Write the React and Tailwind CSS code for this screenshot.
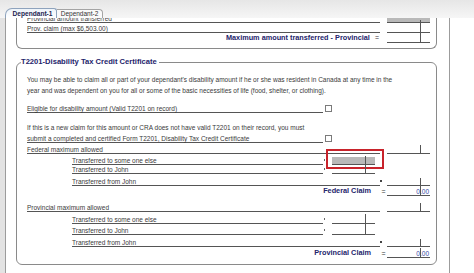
import React from "react";

// small field on the right side of a row, with the little tick mark the form draws
const Field = ({ tick, gray, children }) => (
  <div className="relative shrink-0 w-[43px] h-full flex items-end justify-end">
    {gray && <div className="absolute inset-x-0 bottom-0 h-[8px] bg-[#b9b9b9]" />}
    <div className="relative w-full border-b border-[#555] flex justify-end text-[6.5px] leading-[7px] text-[#3748a6] pr-[1px]">
      {children}
    </div>
    {tick && <div className={`absolute left-[33px] bottom-0 border-l border-[#555] ${tick}`} />}
  </div>
);

const Dot = () => (
  <div className="shrink-0 w-[9px] h-full flex items-end">
    <div className="ml-[1px] mb-[4px] w-[1px] h-[2px] bg-[#666]" />
  </div>
);

const Bullet = () => (
  <div className="shrink-0 w-[7px] h-full flex items-end">
    <div className="mb-[4px] w-[2px] h-[2px] bg-[#444]" />
  </div>
);

const Check = () => <div className="shrink-0 ml-[2px] mb-[1px] w-[7px] h-[7px] border border-[#7a7a7a] bg-white" />;

const label = "shrink-0 border-b border-[#555] text-[6.5px] leading-[7px] text-[#3a3a3a] whitespace-nowrap";
const claim = "font-bold text-[7.3px] leading-[8px] text-[#24246b] whitespace-nowrap";

const App = () => {
  return (
    <div className="w-[474px] h-[273px] overflow-hidden bg-white font-['Liberation_Sans',Arial,sans-serif]">
      {/* tab strip */}
      <div className="h-[18px] bg-linear-to-b from-[#e6e6e6] to-[#f6f6f6] flex items-end pl-[5px]">
        <div className="h-[10px] w-[52px] rounded-tl-[7px] rounded-tr-[3px] border border-b-0 border-[#8ea3bd] bg-linear-to-b from-[#eef4fa] to-white flex items-center justify-center pl-[3px] text-[6.6px] font-bold text-[#1c2450]">
          Dependant-1
        </div>
        <div className="h-[9px] w-[46px] rounded-tr-[4px] border border-l-0 border-b-0 border-[#a4a4a4] bg-[#fafafa] flex items-center justify-center text-[6.5px] text-[#333]">
          Dependant-2
        </div>
      </div>

      <div className="flex h-[255px]">
        <div className="w-[5px] bg-[#e3e3e3]" />
        <div className="w-[445px] border-l border-r border-[#9c9c9c] pl-[10px] overflow-hidden">
          {/* top panel, cut off by the tab strip */}
          <div className="w-[421px] border-l border-r border-b border-[#8a8a8a] rounded-b-[6px] pl-[10px] pb-[5px]">
            <div className="flex items-end h-[5px] overflow-hidden">
              <div className={`w-[353px] ${label}`}>Provincial amount transferred</div>
              <div className="shrink-0 w-[7px]" />
              <Field gray tick="h-[3px]" />
            </div>
            <div className="flex items-end h-[10px]">
              <div className={`w-[353px] ${label}`}>Prov. claim (max $6,503.00)</div>
              <div className="shrink-0 w-[7px]" />
              <Field tick="h-[10px]" />
            </div>
            <div className="flex items-end h-[10px]">
              <div className="shrink-0 w-[360px] flex justify-end items-end pr-[8px] pb-[1px]">
                <span className={claim}>Maximum amount transferred - Provincial</span>
                <span className="ml-[5px] text-[7px] leading-[8px] text-[#333]">=</span>
              </div>
              <Field tick="h-[10px]" />
            </div>
          </div>

          {/* T2201 panel */}
          <fieldset className="mt-[9px] w-[421px] border border-[#8a8a8a] rounded-[6px] pl-[10px] pb-[6px]">
            <legend className="ml-[-6px] pr-[2px] text-[7.6px] leading-[8px] font-bold text-[#24246b]">
              T2201-Disability Tax Credit Certificate
            </legend>

            <p className="mt-[8px] text-[6.5px] leading-[11px] text-[#3a3a3a] whitespace-nowrap">
              You may be able to claim all or part of your dependant's disability amount if he or she was resident in Canada at any time in the
              <br />
              year and was dependent on you for all or some of the basic necessities of life (food, shelter, or clothing).
            </p>

            <div className="flex items-end h-[17px]">
              <div className={`w-[296px] ${label}`}>Eligible for disability amount (Valid T2201 on record)</div>
              <Check />
            </div>

            <p className="mt-[9px] text-[6.5px] leading-[11px] text-[#3a3a3a] whitespace-nowrap">
              If this is a new claim for this amount or CRA does not have valid T2201 on their record, you must
            </p>
            <div className="flex items-end h-[10px]">
              <div className={`w-[296px] ${label}`}>submit a completed and certified Form T2201, Disability Tax Credit Certificate</div>
              <Check />
            </div>

            {/* federal */}
            <div className="flex items-end h-[11px]">
              <div className={`w-[353px] ${label}`}>Federal maximum allowed</div>
              <div className="shrink-0 w-[7px]" />
              <Field tick="h-[9px]" />
            </div>
            <div className="flex items-end h-[11px]">
              <div className="shrink-0 w-[45px]" />
              <div className={`w-[251px] ${label}`}>Transferred to some one else</div>
              <Dot />
              <div className="relative shrink-0 flex h-full">
                <Field gray tick="h-[9px]" />
                <div className="absolute left-[-6px] right-[-9px] top-[-5px] bottom-[-4px] border-2 border-[#c8232b]" />
              </div>
            </div>
            <div className="flex items-end h-[9px]">
              <div className="shrink-0 w-[45px]" />
              <div className={`w-[251px] ${label}`}>Transferred to John</div>
              <Dot />
              <Field tick="h-[9px]" />
            </div>
            <div className="flex items-end h-[12px]">
              <div className="shrink-0 w-[45px]" />
              <div className={`w-[308px] ${label}`}>Transferred from John</div>
              <Bullet />
              <Field tick="h-[8px]" />
            </div>
            <div className="flex items-end h-[10px]">
              <div className="shrink-0 w-[353px] flex justify-end pr-[9px] pb-[1px]">
                <span className={claim}>Federal Claim</span>
              </div>
              <div className="shrink-0 w-[7px] text-[7px] leading-[9px] text-[#333] text-center">=</div>
              <Field tick="h-[10px]">0.00</Field>
            </div>

            {/* provincial */}
            <div className="flex items-end h-[16px]">
              <div className={`w-[353px] ${label}`}>Provincial maximum allowed</div>
              <div className="shrink-0 w-[7px]" />
              <Field tick="h-[9px]" />
            </div>
            <div className="flex items-end h-[12px]">
              <div className="shrink-0 w-[45px]" />
              <div className={`w-[251px] ${label}`}>Transferred to some one else</div>
              <Dot />
              <Field tick="h-[10px]" />
            </div>
            <div className="flex items-end h-[11px]">
              <div className="shrink-0 w-[45px]" />
              <div className={`w-[251px] ${label}`}>Transferred to John</div>
              <Dot />
              <Field tick="h-[11px]" />
            </div>
            <div className="flex items-end h-[12px]">
              <div className="shrink-0 w-[45px]" />
              <div className={`w-[308px] ${label}`}>Transferred from John</div>
              <Bullet />
              <Field tick="h-[8px]" />
            </div>
            <div className="flex items-end h-[11px]">
              <div className="shrink-0 w-[353px] flex justify-end pr-[9px] pb-[1px]">
                <span className={claim}>Provincial Claim</span>
              </div>
              <div className="shrink-0 w-[7px] text-[7px] leading-[9px] text-[#333] text-center">=</div>
              <Field tick="h-[10px]">0.00</Field>
            </div>
          </fieldset>
        </div>
      </div>
    </div>
  );
};

export default App;
